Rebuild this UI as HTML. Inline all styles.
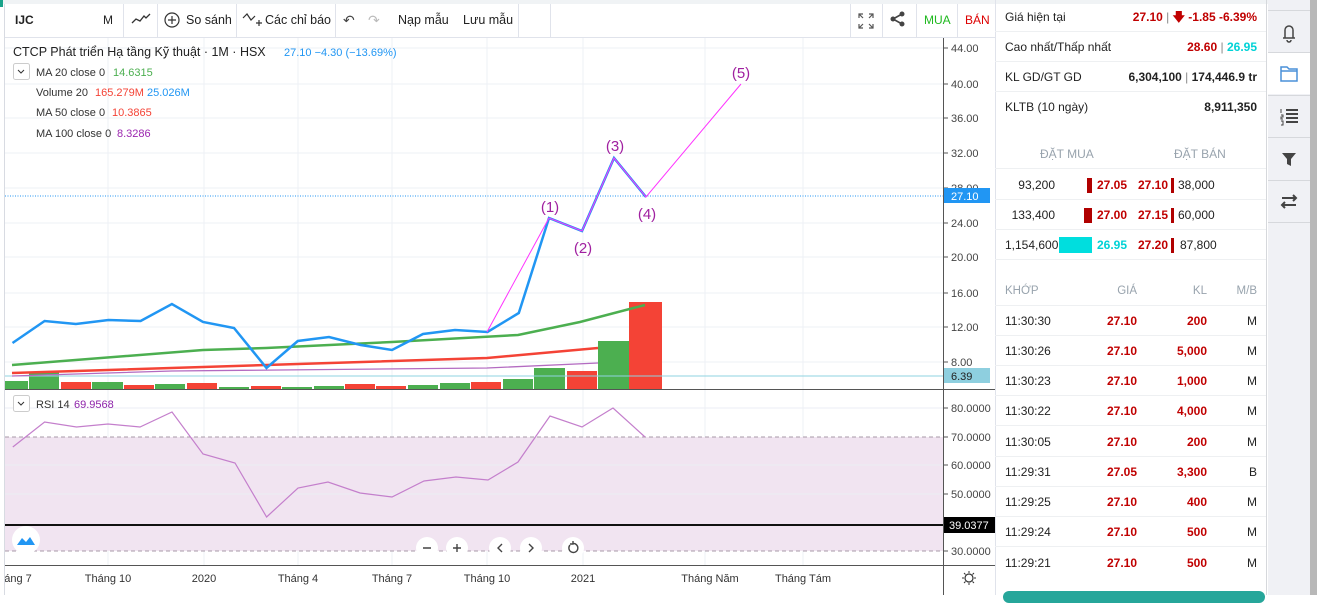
<!DOCTYPE html>
<html><head><meta charset="utf-8">
<style>
*{margin:0;padding:0;box-sizing:border-box}
body{width:1317px;height:595px;overflow:hidden;background:#fff;font-family:"Liberation Sans",sans-serif;position:relative;color:#222}
.abs{position:absolute}
.tb{position:absolute;top:4px;height:33px;font-size:12.5px;line-height:33px;color:#222}
.sep{position:absolute;top:4px;width:1px;height:33px;background:#e0e3eb}
.rp{position:absolute;left:995px;width:272px;font-size:12px}
.row{position:absolute;left:0;width:272px;height:30px;line-height:30px;border-bottom:1px solid #eef0f2}
.red{color:#c00000;font-weight:bold}
.sb{position:absolute;left:1268px;width:42px;height:42px;border-top:1px solid #d6d8dc;background:#f0f1f5}
</style></head><body>
<div class="abs" style="left:0;top:0;width:1317px;height:4px;background:#f0f3f5"></div>
<div class="abs" style="left:0;top:0;width:3px;height:7px;background:#1aa38a"></div>
<div class="abs" style="left:4px;top:4px;width:1px;height:591px;background:#d8dbe2"></div>
<!-- toolbar -->
<div class="abs" style="left:5px;top:37px;width:990px;height:1px;background:#e0e3eb"></div>
<div class="tb" style="left:15px;font-weight:bold;font-size:12px">IJC</div>
<div class="tb" style="left:103px;font-size:12px">M</div>
<div class="sep" style="left:123px"></div>
<svg class="abs" style="left:131px;top:13px" width="20" height="14"><path d="M1 10 L5 6 L9 8 L13 3 L15 5 L19 1" fill="none" stroke="#333" stroke-width="1.3"/></svg>
<div class="sep" style="left:157px"></div>
<svg class="abs" style="left:164px;top:12px" width="16" height="16"><circle cx="8" cy="8" r="7" fill="none" stroke="#333" stroke-width="1.2"/><path d="M8 4v8M4 8h8" stroke="#333" stroke-width="1.2"/></svg>
<div class="tb" style="left:186px">So sánh</div>
<div class="sep" style="left:236px"></div>
<svg class="abs" style="left:242px;top:11px" width="22" height="18"><path d="M1 7 L5 3 L9 9 L13 5" fill="none" stroke="#333" stroke-width="1.2"/><path d="M14 12h6M17 9v6" stroke="#333" stroke-width="1.2"/></svg>
<div class="tb" style="left:265px">Các chỉ báo</div>
<div class="sep" style="left:335px"></div>
<div class="tb" style="left:343px;font-size:14px;color:#444">↶</div>
<div class="tb" style="left:368px;font-size:14px;color:#bbb">↷</div>
<div class="tb" style="left:398px">Nạp mẫu</div>
<div class="tb" style="left:463px">Lưu mẫu</div>
<div class="sep" style="left:518px"></div>
<div class="sep" style="left:550px"></div>
<div class="sep" style="left:850px"></div>
<svg class="abs" style="left:858px;top:13px" width="16" height="16"><path d="M1 5V1h4M1 1l4 4M15 5V1h-4M15 1l-4 4M1 11v4h4M1 15l4-4M15 11v4h-4M15 15l-4-4" fill="none" stroke="#555" stroke-width="1.2"/></svg>
<div class="sep" style="left:882px"></div>
<svg class="abs" style="left:890px;top:11px" width="16" height="16"><circle cx="12" cy="3" r="2.5" fill="#444"/><circle cx="3" cy="8" r="2.5" fill="#444"/><circle cx="12" cy="13" r="2.5" fill="#444"/><path d="M12 3L3 8L12 13" stroke="#444" stroke-width="1.6" fill="none"/></svg>
<div class="sep" style="left:916px"></div>
<div class="tb" style="left:924px;color:#1fb91f;font-size:12px">MUA</div>
<div class="sep" style="left:957px"></div>
<div class="tb" style="left:965px;color:#d00;font-size:12px">BÁN</div>
<div class="sep" style="left:995px;top:0;height:595px;background:#e0e3eb"></div>

<svg class="abs" style="left:5px;top:38px" width="990" height="557" viewBox="5 38 990 557" font-family="Liberation Sans, sans-serif">
<g stroke="#eef1f6" stroke-width="1">
<path d="M5 48H943M5 84H943M5 118H943M5 153H943M5 188H943M5 223H943M5 257H943M5 293H943M5 327H943M5 362H943"/>
<path d="M108 38V565M204 38V565M298 38V565M392 38V565M487 38V565M583 38V565M705 38V565M803 38V565"/>
</g>
<!-- rsi band -->
<rect x="5" y="437" width="938" height="114" fill="#f1e4f1"/>
<g stroke="#ebeef4"><path d="M5 465H943M5 494H943M5 408H943"/></g>
<path d="M5 437H943M5 551H943" stroke="#a89aa8" stroke-dasharray="4,3"/>
<path d="M5 525H943" stroke="#111" stroke-width="2"/>
<path d="M12.8 447L44.6 422L76.5 427L108 424L140 427L172 412L203 454L235 463L266.6 517L298 488L328 482L360 493L392 497L424 481L456 477L488 480L518 462L550 416L582 427L613 408L645 437" fill="none" stroke="#c47fcc" stroke-width="1.2"/>
<!-- volume bars -->
<g>
<rect x="5" y="381" width="23" height="8" fill="#4caf50"/>
<rect x="29" y="372" width="30" height="17" fill="#4caf50"/>
<rect x="61" y="382" width="30" height="7" fill="#f44336"/>
<rect x="92" y="382" width="31" height="7" fill="#4caf50"/>
<rect x="124" y="385" width="30" height="4" fill="#f44336"/>
<rect x="155" y="384" width="30" height="5" fill="#4caf50"/>
<rect x="187" y="383" width="30" height="6" fill="#f44336"/>
<rect x="219" y="387" width="30" height="2" fill="#4caf50"/>
<rect x="251" y="386" width="30" height="3" fill="#f44336"/>
<rect x="282" y="387" width="30" height="2" fill="#4caf50"/>
<rect x="314" y="386" width="30" height="3" fill="#4caf50"/>
<rect x="345" y="384" width="30" height="5" fill="#f44336"/>
<rect x="376" y="386" width="30" height="3" fill="#f44336"/>
<rect x="408" y="385" width="30" height="4" fill="#4caf50"/>
<rect x="440" y="383" width="30" height="6" fill="#4caf50"/>
<rect x="471" y="382" width="30" height="7" fill="#f44336"/>
<rect x="503" y="379" width="30" height="10" fill="#4caf50"/>
<rect x="534" y="368" width="31" height="21" fill="#4caf50"/>
<rect x="567" y="371" width="30" height="18" fill="#f44336"/>
<rect x="598" y="341" width="31" height="48" fill="#4caf50"/>
<rect x="629" y="302" width="33" height="87" fill="#f44336"/>
</g>
<path d="M5 376H943" stroke="#8fd3e0" stroke-width="1"/>
<path d="M5 196H943" stroke="#2196f3" stroke-dasharray="1,1.5"/>
<!-- MAs -->
<path d="M12 376L172 371L487 368L598 363" fill="none" stroke="#b36bc1" stroke-width="1.3"/>
<path d="M12 373L266 365L487 358L598 348" fill="none" stroke="#f44336" stroke-width="2.5"/>
<path d="M12 365L203 350L266 348L392 342L518 335L580 322L645 305" fill="none" stroke="#4caf50" stroke-width="2.5"/>
<path d="M12.5 343L44.6 321L75.9 324L108.5 320L140.6 321L171.9 304L203 322L234 328L266.5 368L297.8 341L329 337L360.7 345L392 350L423 334L455 330L487.5 332L518.8 313L549 218L582 231L614 158L646 197" fill="none" stroke="#2196f3" stroke-width="2.5"/>
<path d="M487 332L549 218L582 231L614 158L646 197L741 84" fill="none" stroke="#ff33ff" stroke-width="1"/>
<g fill="#a020a0" font-size="15" text-anchor="middle">
<text x="550" y="212">(1)</text><text x="583" y="253">(2)</text><text x="615" y="151">(3)</text><text x="647" y="219">(4)</text><text x="741" y="78">(5)</text>
</g>
<!-- pane borders -->
<path d="M5 389.5H995M5 565.5H995" stroke="#555" stroke-width="1"/>
<path d="M943.5 38V595" stroke="#555" stroke-width="1"/>
<!-- axis labels -->
<g font-size="11" fill="#444">
<g><text x="951" y="52">44.00</text><text x="951" y="88">40.00</text><text x="951" y="122">36.00</text><text x="951" y="157">32.00</text><text x="951" y="192">28.00</text><text x="951" y="227">24.00</text><text x="951" y="261">20.00</text><text x="951" y="297">16.00</text><text x="951" y="331">12.00</text><text x="951" y="366">8.00</text></g>
<g><text x="951" y="412">80.0000</text><text x="951" y="441">70.0000</text><text x="951" y="469">60.0000</text><text x="951" y="498">50.0000</text><text x="951" y="555">30.0000</text></g>
</g>
<path d="M944 48h4M944 84h4M944 118h4M944 153h4M944 188h4M944 223h4M944 257h4M944 293h4M944 327h4M944 362h4M944 408h4M944 437h4M944 465h4M944 494h4M944 551h4" stroke="#555"/>
<rect x="944" y="188" width="46" height="15" fill="#2196f3"/><text x="951" y="200" font-size="11" fill="#fff">27.10</text>
<rect x="944" y="368" width="46" height="15" fill="#8ecfdf"/><text x="951" y="380" font-size="11" fill="#222">6.39</text>
<rect x="944" y="517" width="51" height="16" fill="#000"/><text x="949" y="529" font-size="11" fill="#fff">39.0377</text>
<g font-size="11" fill="#333" text-anchor="middle">
<text x="18" y="582">áng 7</text><text x="108" y="582">Tháng 10</text><text x="204" y="582">2020</text><text x="298" y="582">Tháng 4</text><text x="392" y="582">Tháng 7</text><text x="487" y="582">Tháng 10</text><text x="583" y="582">2021</text><text x="710" y="582">Tháng Năm</text><text x="803" y="582">Tháng Tám</text>
</g>
<circle cx="969" cy="578" r="4" fill="none" stroke="#333" stroke-width="1.2"/>
<path d="M969 571v2M969 583v2M962 578h2M974 578h2M964 573l1.5 1.5M972.5 581.5l1.5 1.5M974 573l-1.5 1.5M965.5 581.5l-1.5 1.5" stroke="#333"/>
<!-- legend -->
<text x="13" y="56" font-size="12.5" fill="#222">CTCP Phát triển Hạ tầng Kỹ thuật · 1M · HSX</text>
<text x="284" y="56" font-size="11" fill="#2196f3">27.10 −4.30 (−13.69%)</text>
<rect x="13.5" y="63.5" width="16" height="16" rx="2" fill="#fff" stroke="#ccc"/><path d="M18 70l3 3 3-3" stroke="#333" fill="none"/>
<rect x="13.5" y="395.5" width="16" height="16" rx="2" fill="#fff" stroke="#ccc"/><path d="M18 402l3 3 3-3" stroke="#333" fill="none"/>
<g font-size="11" fill="#333">
<text x="36" y="76">MA 20 close 0</text><text x="113" y="76" fill="#4caf50">14.6315</text>
<text x="36" y="96">Volume 20</text><text x="95" y="96" fill="#f44336">165.279M</text><text x="147" y="96" fill="#2196f3">25.026M</text>
<text x="36" y="116">MA 50 close 0</text><text x="112" y="116" fill="#f44336">10.3865</text>
<text x="36" y="137">MA 100 close 0</text><text x="117" y="137" fill="#9c27b0">8.3286</text>
<text x="36" y="408">RSI 14</text><text x="74" y="408" fill="#8e24aa">69.9568</text>
</g>
<!-- nav buttons -->
<circle cx="26" cy="540" r="14" fill="#fff"/>
<path d="M17 545l5-7 4 4 4-5 5 8z" fill="#2196f3"/>
<g fill="#fff"><circle cx="427" cy="548" r="11"/><circle cx="457" cy="548" r="11"/><circle cx="500" cy="548" r="11"/><circle cx="531" cy="548" r="11"/><circle cx="573" cy="548" r="11"/></g>
<g stroke="#444" stroke-width="1.4" fill="none">
<path d="M423 548h8M453 548h8M457 544v8M502 544l-4 4 4 4M529 544l4 4-4 4"/>
<path d="M570 545a4.5 4.5 0 1 0 3-1.5M573 541v3h-3"/>
</g>
</svg>

<!-- right panel -->
<div class="rp" style="top:0;height:595px">
 <div class="row" style="top:2px;left:0"><span style="position:absolute;left:10px">Giá hiện tại</span><span style="position:absolute;right:10px"><b class="red">27.10</b> <span style="color:#888">|</span> <b class="red">🡇 -1.85 -6.39%</b></span></div>
 <div class="row" style="top:32px"><span style="position:absolute;left:10px">Cao nhất/Thấp nhất</span><span style="position:absolute;right:10px"><b class="red">28.60</b> <span style="color:#888">|</span> <b style="color:#00d2d6">26.95</b></span></div>
 <div class="row" style="top:62px"><span style="position:absolute;left:10px">KL GD/GT GD</span><span style="position:absolute;right:10px;font-weight:bold">6,304,100 <span style="font-weight:normal;color:#888">|</span> 174,446.9 tr</span></div>
 <div class="row" style="top:92px;border:none"><span style="position:absolute;left:10px">KLTB (10 ngày)</span><span style="position:absolute;right:10px;font-weight:bold">8,911,350</span></div>
 <div class="row" style="top:139px;color:#98a3ad"><span style="position:absolute;left:45px">ĐẶT MUA</span><span style="position:absolute;left:179px">ĐẶT BÁN</span></div>
 <div class="row" style="top:170px"><span style="position:absolute;right:212px">93,200</span><span class="abs" style="left:92px;top:8px;width:5px;height:15px;background:#b00000"></span><b class="red" style="position:absolute;left:102px">27.05</b><b class="red" style="position:absolute;left:143px">27.10</b><span class="abs" style="left:176px;top:8px;width:3px;height:15px;background:#b00000"></span><span style="position:absolute;left:183px">38,000</span></div>
 <div class="row" style="top:200px"><span style="position:absolute;right:212px">133,400</span><span class="abs" style="left:89px;top:8px;width:8px;height:15px;background:#b00000"></span><b class="red" style="position:absolute;left:102px">27.00</b><b class="red" style="position:absolute;left:143px">27.15</b><span class="abs" style="left:176px;top:8px;width:3px;height:15px;background:#b00000"></span><span style="position:absolute;left:183px">60,000</span></div>
 <div class="row" style="top:230px"><span style="position:absolute;left:10px">1,154,600</span><span class="abs" style="left:64px;top:7px;width:33px;height:16px;background:#00dede"></span><b style="position:absolute;left:102px;color:#00d2d6">26.95</b><b class="red" style="position:absolute;left:143px">27.20</b><span class="abs" style="left:176px;top:8px;width:3px;height:15px;background:#b00000"></span><span style="position:absolute;left:185px">87,800</span></div>
 <div class="row" style="top:276px;color:#98a3ad;font-size:11.5px"><span style="position:absolute;left:10px">KHỚP</span><span style="position:absolute;right:130px">GIÁ</span><span style="position:absolute;right:60px">KL</span><span style="position:absolute;right:10px">M/B</span></div>
</div>
<div class="rp" style="top:306px;height:260px">
 <div class="row" style="top:0"><span style="position:absolute;left:10px">11:30:30</span><b class="red" style="position:absolute;right:130px">27.10</b><b class="red" style="position:absolute;right:60px">200</b><span style="position:absolute;right:10px">M</span></div>
 <div class="row" style="top:30px"><span style="position:absolute;left:10px">11:30:26</span><b class="red" style="position:absolute;right:130px">27.10</b><b class="red" style="position:absolute;right:60px">5,000</b><span style="position:absolute;right:10px">M</span></div>
 <div class="row" style="top:60px"><span style="position:absolute;left:10px">11:30:23</span><b class="red" style="position:absolute;right:130px">27.10</b><b class="red" style="position:absolute;right:60px">1,000</b><span style="position:absolute;right:10px">M</span></div>
 <div class="row" style="top:90px"><span style="position:absolute;left:10px">11:30:22</span><b class="red" style="position:absolute;right:130px">27.10</b><b class="red" style="position:absolute;right:60px">4,000</b><span style="position:absolute;right:10px">M</span></div>
 <div class="row" style="top:121px"><span style="position:absolute;left:10px">11:30:05</span><b class="red" style="position:absolute;right:130px">27.10</b><b class="red" style="position:absolute;right:60px">200</b><span style="position:absolute;right:10px">M</span></div>
 <div class="row" style="top:151px"><span style="position:absolute;left:10px">11:29:31</span><b class="red" style="position:absolute;right:130px">27.05</b><b class="red" style="position:absolute;right:60px">3,300</b><span style="position:absolute;right:10px">B</span></div>
 <div class="row" style="top:181px"><span style="position:absolute;left:10px">11:29:25</span><b class="red" style="position:absolute;right:130px">27.10</b><b class="red" style="position:absolute;right:60px">400</b><span style="position:absolute;right:10px">M</span></div>
 <div class="row" style="top:211px"><span style="position:absolute;left:10px">11:29:24</span><b class="red" style="position:absolute;right:130px">27.10</b><b class="red" style="position:absolute;right:60px">500</b><span style="position:absolute;right:10px">M</span></div>
 <div class="row" style="top:242px;border:none"><span style="position:absolute;left:10px">11:29:21</span><b class="red" style="position:absolute;right:130px">27.10</b><b class="red" style="position:absolute;right:60px">500</b><span style="position:absolute;right:10px">M</span></div>
</div>
<div class="abs" style="left:1003px;top:591px;width:262px;height:12px;border-radius:8px;background:#26a69a"></div>
<div class="abs" style="left:1266px;top:0;width:1px;height:595px;background:#d6d8dc"></div>
<!-- sidebar -->
<div class="abs" style="left:1268px;top:0;width:42px;height:595px;background:#f0f1f5"></div>
<div class="sb" style="top:10px"><svg width="42" height="42"><path d="M15 27h12M17 27v-8a4 4 0 0 1 8 0v8M19 29a2 2 0 0 0 4 0" fill="none" stroke="#444" stroke-width="1.5"/></svg></div>
<div class="sb" style="top:52px;background:#fff"><svg width="42" height="42"><path d="M13 14h6l2 2h8v12H13z M13 18h16" fill="none" stroke="#4a90d9" stroke-width="1.5"/></svg></div>
<div class="sb" style="top:95px"><svg width="42" height="42"><path d="M18 14h12M18 18h12M18 22h12M18 26h12" stroke="#444" stroke-width="2"/><path d="M13 13v4M13 19h2v2h-2v2h2M13 25h2v4h-2" stroke="#444" stroke-width="1" fill="none"/></svg></div>
<div class="sb" style="top:137px"><svg width="42" height="42"><path d="M14 15h14l-5 6v7l-4-2v-5z" fill="#444"/></svg></div>
<div class="sb" style="top:180px"><svg width="42" height="42"><path d="M14 17h14M25 14l3 3-3 3M28 24H14M17 21l-3 3 3 3" fill="none" stroke="#444" stroke-width="2"/></svg></div>
<div class="sb" style="top:222px;height:373px"></div>
<div class="abs" style="left:1310px;top:0;width:7px;height:595px;background:#b8b8b8"></div>
</body></html>
